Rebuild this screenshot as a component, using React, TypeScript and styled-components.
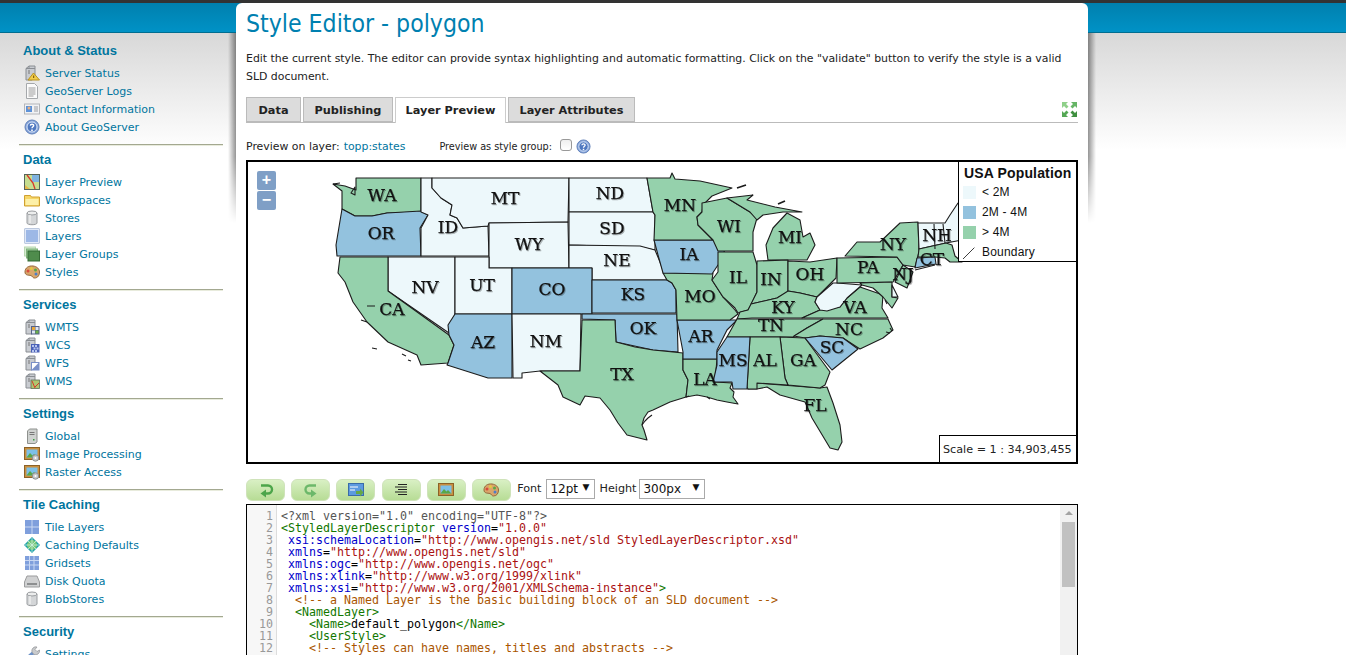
import { ReactNode } from "react";
import styled, { createGlobalStyle } from "styled-components";

const GlobalStyle = createGlobalStyle`
    html, body {
        margin: 0;
        padding: 0;
        background: #fff;
    }
`;

const Page = styled.div`
    width: 1346px;
    height: 655px;
    overflow: hidden;
    display: grid;
    grid-template-columns: 236px 852px;
    align-items: start;
    font-family: "DejaVu Sans", sans-serif;
    font-size: 11px;
    color: #222;
    background:
        linear-gradient(#333 0, #333 3px, transparent 3px) no-repeat,
        linear-gradient(#0080ae 3px, #0092c6 32px, #006d90 32px, #006d90 33px, transparent 33px) no-repeat,
        linear-gradient(#d8d8d8 33px, #fff 150px) no-repeat;
`;

/* ---------- sidebar ---------- */
const Sidebar = styled.nav`
    width: 204px;
    margin-left: 19px;
    padding-top: 42px;
`;
const Section = styled.section<{ $last?: boolean }>`
    padding: 0 0 8px 4px;
    margin-bottom: 6px;
    border-bottom: ${(p) => (p.$last ? "none" : "1px solid #a3a890")};
    box-shadow: ${(p) => (p.$last ? "none" : "0 1px 0 #e8ebdc")};
`;
const SectionTitle = styled.h3`
    margin: 0 0 5px;
    padding-top: 1px;
    font-family: "Liberation Sans", sans-serif;
    font-size: 13px;
    line-height: 16px;
    font-weight: bold;
    color: #00759e;
`;
const NavItem = styled.a`
    display: flex;
    align-items: center;
    gap: 5px;
    height: 18px;
    padding-left: 1px;
    color: #00759e;
    white-space: nowrap;
`;
const IconBox = styled.svg<{ $size?: number }>`
    width: ${(p) => p.$size ?? 16}px;
    height: ${(p) => p.$size ?? 16}px;
    flex: none;
`;

/* ---------- main card ---------- */
const Card = styled.main`
    position: relative;
    margin-top: 3px;
    padding: 0 10px;
    height: 652px;
    background: #fff;
    border-radius: 6px 6px 0 0;

    &::before,
    &::after {
        content: "";
        position: absolute;
        top: 30px;
        width: 8px;
        height: 190px;
        -webkit-mask-image: linear-gradient(#000 65%, transparent);
        mask-image: linear-gradient(#000 65%, transparent);
    }
    &::before {
        left: -8px;
        background: linear-gradient(to left, rgba(0, 0, 0, 0.42), transparent);
    }
    &::after {
        right: -8px;
        background: linear-gradient(to right, rgba(0, 0, 0, 0.42), transparent);
    }
`;
const Title = styled.h1`
    margin: 0;
    padding-top: 5px;
    font-family: "DejaVu Sans Condensed", "DejaVu Sans", sans-serif;
    font-stretch: condensed;
    font-size: 24.6px;
    line-height: 32px;
    height: 32px;
    font-weight: normal;
    color: #0080b0;
`;
const Description = styled.p`
    margin: 10px 0 11px;
    font-size: 10.9px;
    line-height: 18px;
    height: 36px;
    color: #222;
`;
const Tabs = styled.div`
    display: flex;
    align-items: flex-end;
    gap: 2px;
    height: 25px;
    border-bottom: 1px solid #bbb;
`;
const Tab = styled.div<{ $active?: boolean; $width: number }>`
    box-sizing: border-box;
    width: ${(p) => p.$width}px;
    height: ${(p) => (p.$active ? 26 : 25)}px;
    margin-bottom: ${(p) => (p.$active ? -1 : 0)}px;
    text-align: center;
    line-height: 25px;
    font-weight: bold;
    font-size: 11.3px;
    color: #222;
    background: ${(p) => (p.$active ? "#fff" : "#dcdcdc")};
    border: 1px solid ${(p) => (p.$active ? "#ccc" : "#bbb")};
    border-bottom: ${(p) => (p.$active ? "none" : "1px solid #bbb")};
`;
const FullScreen = styled.svg`
    width: 17px;
    height: 17px;
    margin-left: auto;
    align-self: center;
`;
const PreviewRow = styled.div`
    display: flex;
    align-items: center;
    height: 18px;
    margin: 14px 0 5px;
    font-size: 10.9px;
`;
const LayerLink = styled.a`
    margin-left: 4px;
    color: #00759e;
`;
const GroupLabel = styled.span`
    margin-left: 34px;
    font-size: 9.7px;
`;
const Check = styled.input`
    appearance: none;
    width: 12px;
    height: 12px;
    margin: -3px 0 0 8px;
    border: 1px solid #999;
    border-radius: 3px;
    background: linear-gradient(#eee, #fff);
`;
const HelpIcon = styled.svg`
    width: 15px;
    height: 15px;
    margin-left: 4px;
`;

/* ---------- map ---------- */
const MapFrame = styled.div`
    position: relative;
    box-sizing: border-box;
    width: 832px;
    height: 304px;
    border: 2px solid #000;
    overflow: hidden;
`;
const MapSvg = styled.svg`
    display: block;
    width: 828px;
    height: 300px;
`;
const StateLabel = styled.text`
    font-family: "DejaVu Serif", serif;
    font-size: 17px;
    text-anchor: middle;
    dominant-baseline: central;
    fill: #111;
    stroke: #111;
    stroke-width: 0.25;
    filter: drop-shadow(1px 1px 0 rgba(0, 0, 0, 0.3));
`;
const ZoomControls = styled.div`
    position: absolute;
    left: 9px;
    top: 9px;
    display: flex;
    flex-direction: column;
    gap: 1px;
`;
const ZoomButton = styled.div`
    width: 19px;
    height: 19px;
    border-radius: 2px;
    background: #7f9fc6;
    color: #fff;
    text-align: center;
    font: bold 16px/18px "Liberation Sans", sans-serif;
`;
const Legend = styled.div`
    position: absolute;
    right: 0;
    top: 0;
    box-sizing: border-box;
    width: 118px;
    height: 100px;
    padding: 2px 0 0 4px;
    background: #fff;
    border-left: 1px solid #000;
    border-bottom: 1px solid #000;
    font-family: "Liberation Sans", sans-serif;
    font-size: 12px;
    color: #111;
`;
const LegendTitle = styled.div`
    padding-left: 1px;
    font-size: 14px;
    line-height: 18px;
    font-weight: bold;
    letter-spacing: 0.15px;
    white-space: nowrap;
`;
const LegendRow = styled.div`
    display: flex;
    align-items: center;
    gap: 6px;
    height: 20px;
    letter-spacing: 0.2px;
`;
const Swatch = styled.span<{ $color: string }>`
    width: 13px;
    height: 13px;
    background: ${(p) => p.$color};
`;
const ScaleBox = styled.div`
    position: absolute;
    right: 0;
    bottom: 0;
    box-sizing: border-box;
    width: 137px;
    height: 27px;
    padding-left: 3px;
    background: #fff;
    border-left: 1px solid #000;
    border-top: 1px solid #000;
    font-size: 11.2px;
    line-height: 27px;
    white-space: nowrap;
`;

/* ---------- editor ---------- */
const Toolbar = styled.div`
    display: flex;
    align-items: flex-start;
    height: 22px;
    margin: 15px 0 3px;
`;
const ToolButton = styled.div`
    box-sizing: border-box;
    display: flex;
    align-items: center;
    justify-content: center;
    width: 39px;
    height: 22px;
    margin-right: 6.2px;
    border: 1px solid #cfe3ba;
    border-radius: 6px;
    background: linear-gradient(#d9f0c4, #b7dc95);
`;
const ToolLabel = styled.span<{ $gap: number }>`
    margin-right: ${(p) => p.$gap}px;
    line-height: 20px;
    font-size: 11.2px;
    color: #222;
`;
const FakeSelect = styled.div<{ $width: number }>`
    box-sizing: border-box;
    display: flex;
    justify-content: space-between;
    width: ${(p) => p.$width}px;
    height: 20px;
    margin-right: 4px;
    padding: 0 5px 0 3px;
    border: 1px solid #aaa;
    line-height: 18px;
    font-size: 12px;
    color: #111;
`;
const Caret = styled.span`
    font-size: 9px;
    line-height: 15px;
`;
const Editor = styled.div`
    position: relative;
    display: flex;
    box-sizing: border-box;
    width: 832px;
    height: 200px;
    padding-top: 5px;
    border: 1px solid #000;
    font-family: "DejaVu Sans Mono", monospace;
    font-size: 11.63px;
    line-height: 12px;
`;
const Gutter = styled.div`
    position: absolute;
    left: 0;
    top: 0;
    bottom: 0;
    box-sizing: border-box;
    width: 30px;
    padding: 5px 3px 0 0;
    background: #f7f7f7;
    border-right: 1px solid #ddd;
    color: #999;
    text-align: right;
`;
const Code = styled.div`
    margin-left: 34px;
    white-space: pre;
`;
const Token = styled.span<{ $kind: TokenKind }>`
    color: ${(p) => tokenColors[p.$kind]};
`;
const ScrollTrack = styled.div`
    position: absolute;
    right: 0;
    top: 0;
    bottom: 0;
    width: 17px;
    background: #f1f1f1;
`;
const ScrollArrow = styled.div`
    width: 0;
    margin: 6px auto 0;
    border: 4px solid transparent;
    border-top: 0;
    border-bottom: 4px solid #a3a3a3;
`;
const ScrollThumb = styled.div`
    margin: 7px 2px 0;
    height: 65px;
    background: #c1c1c1;
`;

type TokenKind = "meta" | "tag" | "attr" | "str" | "comment" | "text";
const tokenColors: Record<TokenKind, string> = {
    meta: "#555",
    tag: "#117700",
    attr: "#0000cc",
    str: "#aa1111",
    comment: "#aa5500",
    text: "#000",
};
const codeLines: [TokenKind, string][][] = [
    [["meta", `<?xml version="1.0" encoding="UTF-8"?>`]],
    [["tag", "<StyledLayerDescriptor"], ["text", " "], ["attr", "version"], ["text", "="], ["str", `"1.0.0"`]],
    [["text", " "], ["attr", "xsi:schemaLocation"], ["text", "="], ["str", `"http://www.opengis.net/sld StyledLayerDescriptor.xsd"`]],
    [["text", " "], ["attr", "xmlns"], ["text", "="], ["str", `"http://www.opengis.net/sld"`]],
    [["text", " "], ["attr", "xmlns:ogc"], ["text", "="], ["str", `"http://www.opengis.net/ogc"`]],
    [["text", " "], ["attr", "xmlns:xlink"], ["text", "="], ["str", `"http://www.w3.org/1999/xlink"`]],
    [["text", " "], ["attr", "xmlns:xsi"], ["text", "="], ["str", `"http://www.w3.org/2001/XMLSchema-instance"`], ["tag", ">"]],
    [["comment", "  <!-- a Named Layer is the basic building block of an SLD document -->"]],
    [["tag", "  <NamedLayer>"]],
    [["tag", "    <Name>"], ["text", "default_polygon"], ["tag", "</Name>"]],
    [["tag", "    <UserStyle>"]],
    [["comment", "    <!-- Styles can have names, titles and abstracts -->"]],
    [["tag", "      <Title>"], ["text", "Default Polygon"], ["tag", "</Title>"]],
];

/* ---------- map data, in page coordinates ---------- */
const LIGHT = "#edf8fb";
const BLUE = "#93c2de";
const GREEN = "#95d1ac";
const states: [string, string][] = [
    [GREEN, "356,178 421,178 421,212 387,213 372,216 355,216 342,209 342,191 333,184 345,186 356,190"],
    [BLUE, "342,209 355,216 372,216 387,213 421,211 428,215 420,228 421,256 337,256 336,245"],
    [LIGHT, "421,178 432,178 432,188 441,198 452,205 450,215 457,218 463,228 488,226 489,256 421,256 421,228 428,215 421,212"],
    [LIGHT, "432,178 569,178 568,222 489,223 488,226 463,228 457,218 450,215 452,205 441,198 432,188"],
    [LIGHT, "569,178 647,178 653,212 569,212"],
    [LIGHT, "569,212 653,212 655,215 655,250 640,247 569,245"],
    [LIGHT, "489,223 568,222 569,268 489,268"],
    [LIGHT, "569,245 640,246 655,250 660,262 667,280 592,280 592,268 569,268"],
    [LIGHT, "388,257 455,257 455,314 449,333 388,291"],
    [GREEN, "340,257 388,257 388,291 449,335 454,345 448,363 421,365 417,355 388,342 367,322 353,302 345,282 338,273"],
    [LIGHT, "455,257 489,257 489,268 512,268 512,314 455,314"],
    [BLUE, "512,268 592,268 592,280 592,314 512,314"],
    [BLUE, "455,314 512,314 512,378 488,378 447,365 448,363 454,345 449,335 448,325"],
    [LIGHT, "512,314 581,314 580,371 540,371 522,373 522,378 513,378"],
    [BLUE, "592,280 667,280 672,283 676,290 676,313 592,313"],
    [BLUE, "582,314 677,314 678,352 653,350 616,342 615,320 582,319"],
    [GREEN, "582,320 615,320 616,342 635,347 653,350 683,353 683,370 688,380 686,397 670,402 653,410 648,412 644,418 642,425 644,430 647,440 627,435 618,423 610,410 600,398 585,396 580,405 563,397 558,385 540,371 580,371"],
    [GREEN, "683,359 717,359 715,382 732,383 730,388 734,392 733,397 738,404 727,402 717,400 707,397 697,395 686,397 688,380 683,370"],
    [BLUE, "677,320 737,320 727,330 717,350 717,359 683,359 683,352"],
    [GREEN, "663,273 713,273 712,280 723,297 735,310 738,314 730,320 677,320 676,290 672,283 667,280"],
    [BLUE, "654,240 715,240 727,255 718,265 712,274 663,273 658,255"],
    [GREEN, "647,178 670,178 672,173 675,179 700,181 732,188 712,196 703,205 702,212 697,217 698,225 713,240 654,240 655,215 653,212"],
    [GREEN, "702,203 727,198 750,212 757,218 753,232 753,251 718,251 713,240 698,225 697,217 702,212"],
    [GREEN, "727,198 753,195 747,200 775,207 802,212 783,212 763,215 757,220 750,212"],
    [GREEN, "768,260 766,245 773,228 787,213 800,220 803,237 810,233 815,245 807,260"],
    [GREEN, "718,252 753,252 757,265 757,292 751,305 748,310 738,313 735,308 723,297 712,280 718,272"],
    [GREEN, "757,261 788,260 788,292 777,298 751,304 757,292"],
    [GREEN, "788,261 810,262 837,258 836,278 817,297 800,293 788,291"],
    [GREEN, "751,304 777,298 788,291 800,293 817,297 815,302 820,310 802,318 752,318 737,319 740,312 748,310"],
    [GREEN, "737,319 823,319 807,328 793,337 727,337"],
    [GREEN, "823,319 888,319 893,330 883,338 860,349 843,338 820,336 805,338 794,336 807,328"],
    [GREEN, "802,318 820,310 840,307 847,298 860,287 883,295 882,308 888,318"],
    [LIGHT, "817,297 833,283 837,283 862,285 847,298 840,307 827,311 820,310 815,302"],
    [GREEN, "837,258 897,257 903,265 893,282 837,283"],
    [GREEN, "845,256 857,242 880,242 900,223 918,222 919,252 915,267 903,265 897,257"],
    [GREEN, "903,265 913,272 907,288 895,282"],
    [GREEN, "860,283 892,282 892,297 898,298 892,308 883,297 873,288 862,285"],
    [LIGHT, "892,285 898,297 892,297"],
    [LIGHT, "918,223 945,223 950,215 958,203 962,203 962,240 946,243 919,249"],
    [GREEN, "919,249 946,243 952,245 955,256 962,262 950,262 945,258 935,257 918,257"],
    [BLUE, "917,258 935,257 936,264 925,266 915,268"],
    [GREEN, "748,383 757,383 820,388 827,387 833,403 840,425 842,442 838,450 830,448 812,418 805,402 780,395 767,387 757,389 748,389"],
    [GREEN, "780,337 805,338 830,372 825,385 820,388 788,385 785,378"],
    [GREEN, "750,337 780,337 785,378 788,385 757,383 757,389 748,389 747,387"],
    [BLUE, "727,337 750,337 747,389 733,389 732,382 713,382 717,365 717,352"],
    [BLUE, "805,338 820,336 843,338 858,349 832,370"],
];
const stateNames: [string, number, number][] = [
    ["WA", 382, 195], ["OR", 381, 233], ["ID", 448, 227], ["MT", 505, 198], ["ND", 610, 193], ["SD", 612, 228],
    ["WY", 529, 244], ["NE", 617, 260], ["NV", 425, 287], ["UT", 482, 285], ["CO", 552, 289], ["CA", 392, 309],
    ["AZ", 483, 342], ["NM", 546, 341], ["TX", 622, 374], ["KS", 633, 294], ["OK", 643, 328], ["IA", 689, 254],
    ["MO", 700, 296], ["AR", 701, 336], ["LA", 705, 379], ["MS", 733, 360], ["AL", 765, 360], ["GA", 803, 360],
    ["FL", 815, 405], ["SC", 832, 347], ["NC", 849, 329], ["TN", 771, 325], ["KY", 783, 307], ["VA", 855, 307],
    ["WI", 729, 226], ["MI", 790, 237], ["MN", 680, 205], ["IL", 738, 277], ["IN", 771, 279], ["OH", 810, 274],
    ["PA", 868, 267], ["NY", 893, 244], ["NJ", 903, 274], ["NH", 937, 235], ["CT", 932, 259],
];

/* ---------- icons ---------- */
const server = (
    <>
        <path d="M2 3.5 5 1h6v11.5L8 15H2z" fill="#c9ccd1" stroke="#8a8e93" />
        <path d="M5 1v2.5H2M5 3.5h6" fill="none" stroke="#8a8e93" />
        <path d="M4 6h2M4 8h2" stroke="#777" />
    </>
);
const QuestionCircle = () => (
    <>
        <circle cx="8" cy="8" r="7" fill="#8aa8dc" stroke="#5f7fb8" />
        <circle cx="8" cy="8" r="5" fill="#4f78c0" stroke="#dbe6f7" />
        <path d="M6.3 6.6C6.4 4.8 9.8 4.8 9.7 6.6 9.7 7.8 8 7.8 8 9.2" fill="none" stroke="#fff" strokeWidth="1.4" />
        <path d="M7.2 10.4h1.6V12H7.2z" fill="#fff" />
    </>
);
const palette = (
    <>
        <path d="M1 8C1 3.5 5 1.5 9 2c4 .5 6.5 3 6.5 6s-1.500 6-5 6c-2 0-2-2-3.500-2.500C4.500 11 1 11.500 1 8z" fill="#d9a66b" stroke="#96683a" />
        <circle cx="4" cy="7" r="1.500" fill="#d84a3a" />
        <circle cx="7.500" cy="4.500" r="1.500" fill="#e6c840" />
        <circle cx="11.500" cy="6" r="1.500" fill="#5aa846" />
        <circle cx="12" cy="10" r="1.500" fill="#4d7ec8" />
    </>
);
const picture = (
    <>
        <rect x="0.500" y="1.500" width="15" height="12" fill="#c98f3e" stroke="#8c6228" />
        <rect x="2.500" y="3.500" width="11" height="8" fill="#7cc0e8" />
        <path d="M2.500 11.500 6 7l2.500 2.500L10 8l3.500 3.500z" fill="#58a848" />
    </>
);
const database = (
    <>
        <path d="M3 3v10c0 2.300 10 2.300 10 0V3z" fill="#d4d6d8" stroke="#9a9da0" />
        <ellipse cx="8" cy="3" rx="5" ry="2" fill="#eceded" stroke="#9a9da0" />
        <path d="M6 5v8" stroke="#eee" strokeWidth="1.500" />
    </>
);
const gear = (
    <>
        <circle cx="11.500" cy="12" r="3.200" fill="#c7c9cb" stroke="#8e9092" />
        <circle cx="11.500" cy="12" r="1" fill="#fff" />
    </>
);
const navIcons: Record<string, ReactNode> = {
    status: (
        <>
            {server}
            <path d="M9.500 8 15.500 15H4z" fill="#f2cc4a" stroke="#b89320" />
            <path d="M9.700 10.500v2.500" stroke="#6a4a00" />
        </>
    ),
    logs: (
        <>
            <path d="M2.500.5h8l3 3v12h-11z" fill="#fbfbfb" stroke="#a5a8ab" />
            <path d="M4.500 5h7M4.500 7h7M4.500 9h7M4.500 11h7M4.500 13h5" stroke="#9b9b9b" />
        </>
    ),
    contact: (
        <>
            <rect x="0.500" y="3" width="15" height="10" fill="#f1f2f4" stroke="#b4b6ba" />
            <rect x="2" y="5" width="6" height="6" fill="#5d92d8" />
            <circle cx="5" cy="7" r="1.500" fill="#e8b080" />
            <path d="M10 6h4M10 8h4M10 10h4" stroke="#9a9da3" />
        </>
    ),
    about: <QuestionCircle />,
    preview: (
        <>
            <rect x="0.500" y="0.500" width="15" height="15" fill="#c6de90" stroke="#55655a" />
            <path d="M8 1h7v7H8z" fill="#7fb3e0" />
            <path d="M1 11l5 4h-5z" fill="#e6b94a" />
            <path d="M3 1 9 9l2 6" fill="none" stroke="#d8362a" strokeWidth="1.300" />
        </>
    ),
    workspaces: (
        <>
            <path d="M0.500 3.500h6l1 1.500h8v9h-15z" fill="#f6d667" stroke="#d0a030" />
            <path d="M1.500 7h13v6h-13z" fill="#fdf0a8" />
        </>
    ),
    stores: database,
    layers: (
        <>
            <rect x="1" y="1" width="14" height="14" fill="#9db8e6" stroke="#7a93c0" />
            <rect x="1.500" y="1.500" width="13" height="13" fill="none" stroke="#dfe8f8" />
        </>
    ),
    groups: (
        <>
            <rect x="0.500" y="1" width="11" height="9" fill="#d7ecd2" stroke="#b9d8b2" />
            <rect x="2.500" y="3" width="11" height="9" fill="#9fce9a" stroke="#7fb27a" />
            <rect x="4" y="5" width="11.500" height="10" fill="#4f8c4c" stroke="#356a34" />
        </>
    ),
    styles: palette,
    wmts: (
        <>
            {server}
            <rect x="7" y="7" width="8.500" height="8.500" fill="#56638a" />
            <path d="M8 8h3v3H8z" fill="#e6a63a" />
            <path d="M11.500 11.500h3v3h-3z" fill="#6bb04a" />
            <path d="M8 11.500h3v3H8zM11.500 8h3v3h-3z" fill="#dfe6f2" />
        </>
    ),
    wcs: (
        <>
            {server}
            <rect x="7" y="7" width="8.500" height="8.500" fill="#4c62b8" />
            <path d="M8 8h2v2H8zM11 8h2v2h-2zM9.500 10.500h2v2h-2zM12.500 10.500h2v2h-2zM8 13h2v2H8zM11 13h2v2h-2z" fill="#b5c4ee" />
        </>
    ),
    wfs: (
        <>
            {server}
            <rect x="7" y="7" width="8.500" height="8.500" fill="#7a90c8" />
            <path d="M8 8h6.500L8 14.500z" fill="#fff" />
        </>
    ),
    wms: (
        <>
            {server}
            <rect x="7" y="7" width="8.500" height="8.500" fill="#aec56e" stroke="#5f6d55" strokeWidth="0.800" />
            <path d="M8 8l3 7M11 14l4-4" stroke="#d8362a" />
        </>
    ),
    global: (
        <>
            <path d="M3.500 3 5.500 1H13v13l-2 1.500H3.500z" fill="#cfd2d0" stroke="#8e918e" />
            <path d="M5.500 4.500h5M5.500 6.500h5" stroke="#777" />
            <rect x="9" y="11" width="1.500" height="1.500" fill="#36a040" />
        </>
    ),
    image: (
        <>
            {picture}
            {gear}
        </>
    ),
    tile: (
        <>
            <rect x="1" y="1" width="14" height="14" fill="#7f9fdc" />
            <path d="M8 1v14M1 8h14" stroke="#c9d8f3" />
        </>
    ),
    caching: (
        <>
            <path d="M8 0 16 8 8 16 0 8z" fill="#1aa0a8" />
            <circle cx="8" cy="8" r="5" fill="#78c97a" />
            <path d="M8 1v14M1 8h14M4 4l8 8M12 4l-8 8" stroke="#cdeee0" strokeWidth="0.800" />
        </>
    ),
    gridsets: (
        <>
            <rect x="1" y="1" width="14" height="14" fill="#7f9fdc" />
            <path d="M5.500 1v14M10 1v14M1 5.500h14M1 10h14" stroke="#c9d8f3" />
        </>
    ),
    disk: (
        <>
            <path d="M3 3h10l2.500 6v5H.5V9z" fill="#d0d1d2" stroke="#9b9c9d" />
            <rect x="3" y="10" width="10" height="2" fill="#8d8f90" />
        </>
    ),
    wrench: (
        <>
            <path d="M1 14 9 7" stroke="#6f93c8" strokeWidth="3.500" />
            <path d="M8 6a4 4 0 0 1 5-5l-2 2.500 2 2 2.500-1.500a4 4 0 0 1-5.500 4.500z" fill="#c9cbcd" stroke="#909295" strokeWidth="0.700" />
        </>
    ),
};
const toolIcons: Record<string, ReactNode> = {
    undo: (
        <>
            <path d="M3 3.500h7a4 4 0 0 1 0 8H7" fill="none" stroke="#4ca54a" strokeWidth="2.400" />
            <path d="M8 7.500v8L2.500 11.500z" fill="#4ca54a" />
        </>
    ),
    redo: (
        <>
            <path d="M13 3.500H6.500a4 4 0 0 0 0 8H9" fill="none" stroke="#6cb86a" strokeWidth="2.400" />
            <path d="M8 7.500v8l5.500-4z" fill="#6cb86a" />
        </>
    ),
    goto: (
        <>
            <rect x="0.500" y="1.500" width="15" height="12" fill="#5c9ae0" stroke="#3a6ca8" />
            <path d="M2 5h8M2 8h5" stroke="#fff" />
            <path d="M8 9h4V6.500l3.500 4-3.500 4V12H8z" fill="#66a848" />
        </>
    ),
    indent: <path d="M5 2.500h9M2 5h12M5 7.500h9M2 10h12M5 12.500h9" stroke="#222" />,
    picture,
    palette,
};

const items = (names: [string, string][]) =>
    names.map(([icon, label]) => (
        <NavItem key={label}>
            <IconBox viewBox="0 0 16 16">{navIcons[icon]}</IconBox>
            {label}
        </NavItem>
    ));

export default function App() {
    return (
        <Page>
            <GlobalStyle />
            <Sidebar>
                <Section>
                    <SectionTitle>About &amp; Status</SectionTitle>
                    {items([["status", "Server Status"], ["logs", "GeoServer Logs"], ["contact", "Contact Information"], ["about", "About GeoServer"]])}
                </Section>
                <Section>
                    <SectionTitle>Data</SectionTitle>
                    {items([["preview", "Layer Preview"], ["workspaces", "Workspaces"], ["stores", "Stores"], ["layers", "Layers"], ["groups", "Layer Groups"], ["styles", "Styles"]])}
                </Section>
                <Section>
                    <SectionTitle>Services</SectionTitle>
                    {items([["wmts", "WMTS"], ["wcs", "WCS"], ["wfs", "WFS"], ["wms", "WMS"]])}
                </Section>
                <Section>
                    <SectionTitle>Settings</SectionTitle>
                    {items([["global", "Global"], ["image", "Image Processing"], ["image", "Raster Access"]])}
                </Section>
                <Section>
                    <SectionTitle>Tile Caching</SectionTitle>
                    {items([["tile", "Tile Layers"], ["caching", "Caching Defaults"], ["gridsets", "Gridsets"], ["disk", "Disk Quota"], ["stores", "BlobStores"]])}
                </Section>
                <Section $last>
                    <SectionTitle>Security</SectionTitle>
                    {items([["wrench", "Settings"]])}
                </Section>
            </Sidebar>

            <Card>
                <Title>Style Editor - polygon</Title>
                <Description>
                    Edit the current style. The editor can provide syntax highlighting and automatic formatting. Click on the "validate" button to verify the style is a valid SLD document.
                </Description>
                <Tabs>
                    <Tab $width={55}>Data</Tab>
                    <Tab $width={90}>Publishing</Tab>
                    <Tab $width={111} $active>Layer Preview</Tab>
                    <Tab $width={127}>Layer Attributes</Tab>
                    <FullScreen viewBox="0 0 17 17">
                        <path d="M1 1h6L5 3l2.500 2.500L5.500 7.500 3 5 1 7z" fill="#8fd08a" />
                        <path d="M16 1h-6l2 2-2.500 2.500 2 2L14 5l2 2z" fill="#66b566" />
                        <path d="M1 16h6l-2-2 2.500-2.500-2-2L3 12l-2-2z" fill="#55a855" />
                        <path d="M16 16h-6l2-2-2.500-2.500 2-2L14 12l2-2z" fill="#3f9040" />
                    </FullScreen>
                </Tabs>
                <PreviewRow>
                    Preview on layer:
                    <LayerLink>topp:states</LayerLink>
                    <GroupLabel>Preview as style group:</GroupLabel>
                    <Check type="checkbox" readOnly />
                    <HelpIcon viewBox="0 0 16 16"><QuestionCircle /></HelpIcon>
                </PreviewRow>
                <MapFrame>
                    <MapSvg viewBox="248 162 828 300">
                        <g stroke="#1c1c1c" strokeWidth="1.100" strokeLinejoin="round">
                            {states.map(([fill, points]) => (
                                <polygon key={points} fill={fill} points={points} />
                            ))}
                            <path d="M333 184 340 183M355 187l-4 6 4 2zM367 322l-6-2M367 306h8M372 348l5 1M402 354l4 2M408 360l3 1" fill="none" />
                            <path d="M935 249 934 224M945 243 943 224M915 270 935 265" fill="none" />
                            <path d="M737 188 746 185M785 201l-7 3" fill="none" strokeWidth="1.800" />
                            <path d="M642 425l3-4 3-3 4-3M686 397l3-1M707 397l3 2M885 300l2 4M890 328l2 3M886 332l4 1" fill="none" />
                        </g>
                        {stateNames.map(([name, x, y]) => (
                            <StateLabel key={name} x={x} y={y}>{name}</StateLabel>
                        ))}
                    </MapSvg>
                    <ZoomControls>
                        <ZoomButton>+</ZoomButton>
                        <ZoomButton>−</ZoomButton>
                    </ZoomControls>
                    <Legend>
                        <LegendTitle>USA Population</LegendTitle>
                        <LegendRow><Swatch $color={LIGHT} />&lt; 2M</LegendRow>
                        <LegendRow><Swatch $color={BLUE} />2M - 4M</LegendRow>
                        <LegendRow><Swatch $color={GREEN} />&gt; 4M</LegendRow>
                        <LegendRow>
                            <IconBox viewBox="0 0 16 16" $size={13}>
                                <path d="M0 16 14 2" stroke="#111" strokeWidth="1" />
                            </IconBox>
                            Boundary
                        </LegendRow>
                    </Legend>
                    <ScaleBox>Scale = 1 : 34,903,455</ScaleBox>
                </MapFrame>
                <Toolbar>
                    {Object.keys(toolIcons).map((name) => (
                        <ToolButton key={name}>
                            <IconBox viewBox="0 0 16 16">{toolIcons[name]}</IconBox>
                        </ToolButton>
                    ))}
                    <ToolLabel $gap={5}>Font</ToolLabel>
                    <FakeSelect $width={49}>12pt<Caret>▼</Caret></FakeSelect>
                    <ToolLabel $gap={3}>Height</ToolLabel>
                    <FakeSelect $width={66}>300px<Caret>▼</Caret></FakeSelect>
                </Toolbar>
                <Editor>
                    <Gutter>
                        {codeLines.map((_, i) => (
                            <div key={i}>{i + 1}</div>
                        ))}
                    </Gutter>
                    <Code>
                        {codeLines.map((tokens, i) => (
                            <div key={i}>
                                {tokens.map(([kind, text], j) => (
                                    <Token key={j} $kind={kind}>{text}</Token>
                                ))}
                            </div>
                        ))}
                    </Code>
                    <ScrollTrack>
                        <ScrollArrow />
                        <ScrollThumb />
                    </ScrollTrack>
                </Editor>
            </Card>
        </Page>
    );
}
